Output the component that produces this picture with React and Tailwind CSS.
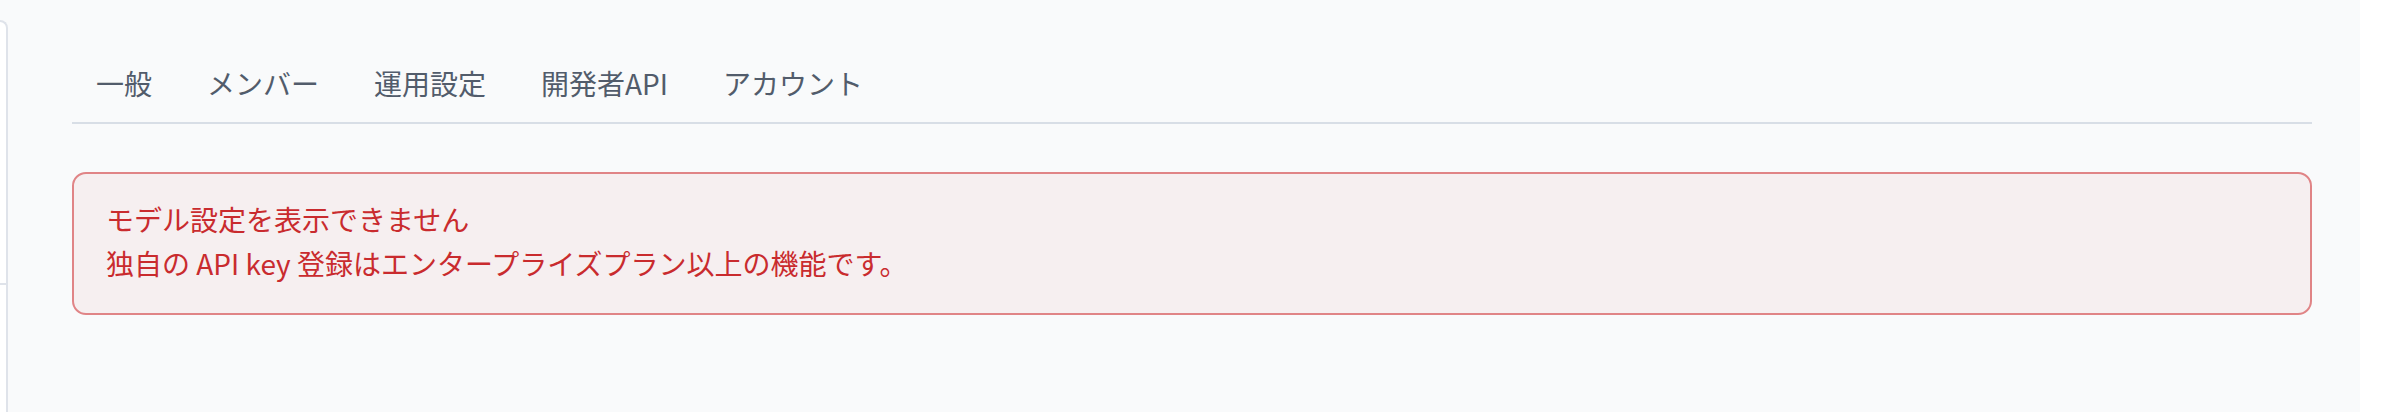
import React from "react";

const tabs = ["一般", "メンバー", "運用設定", "開発者API", "アカウント"];

const App = () => {
  return (
    <div
      className="flex h-[412px] w-full bg-[#f9fafb] overflow-hidden"
      style={{ fontFamily: '"Noto Sans CJK JP", "Noto Sans", sans-serif' }}
    >
      {/* Sidebar edge */}
      <div className="mt-[20px] w-[8px] shrink-0 rounded-tr-[16px] border-r-2 border-t-2 border-[#dfe3ea] bg-white">
        <div className="mt-[261px] border-t-2 border-[#dfe3ea]" />
      </div>

      {/* Main */}
      <div className="flex-1 pl-[64px] pr-[48px] pt-[47px]">
        <div className="flex gap-[7px] border-b-2 border-[#d8dee6]">
          {tabs.map((tab) => (
            <button
              key={tab}
              className="px-6 pt-[16px] pb-[19px] text-[28px] leading-[40px] text-[#525c6b]"
            >
              {tab}
            </button>
          ))}
        </div>

        <div className="mt-12 rounded-[14px] border-2 border-[#e08486] bg-[#f6eff0] px-8 pt-6 pb-[29px] text-[28px] text-[#c92b2e]">
          <p className="leading-[42px]">モデル設定を表示できません</p>
          <p className="mt-[2px] leading-[42px]">
            独自の API key 登録はエンタープライズプラン以上の機能です。
          </p>
        </div>
      </div>

      <div className="w-[24px] shrink-0 bg-white" />
    </div>
  );
};

export default App;
